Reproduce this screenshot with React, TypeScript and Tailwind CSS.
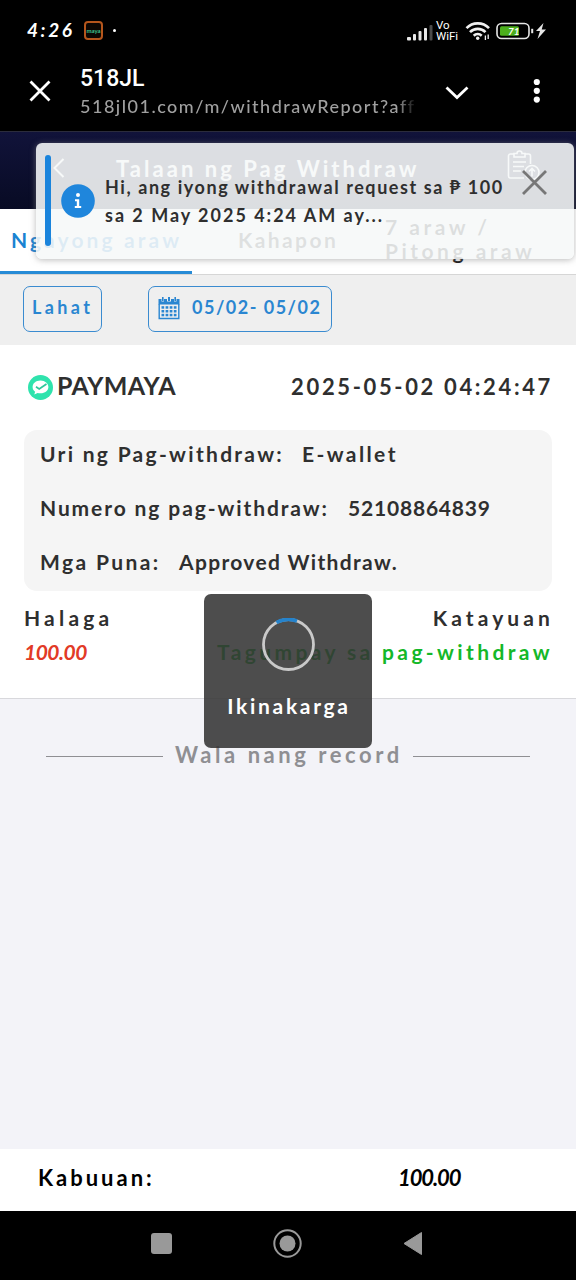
import { clsx } from 'clsx';

const details = [
  {
    label: 'Uri ng Pag-withdraw:',
    value: 'E-wallet',
    labelClass: 'w-[262px] tracking-[2.3px]',
    valueClass: 'tracking-[2.4px]',
  },
  {
    label: 'Numero ng pag-withdraw:',
    value: '52108864839',
    labelClass: 'w-[308px] tracking-[1.9px]',
    valueClass: 'tracking-[0.8px]',
  },
  {
    label: 'Mga Puna:',
    value: 'Approved Withdraw.',
    labelClass: 'w-[139px] tracking-[2.4px]',
    valueClass: 'tracking-[1.33px]',
  },
];

export default function App() {
  return (
    <div className="relative flex h-[1280px] w-[576px] flex-col overflow-hidden bg-[#f3f3f8] font-['Lato',sans-serif] font-bold whitespace-nowrap text-[#2f2f2f]">
      <StatusBar />
      <BrowserBar />
      <PageHeader />
      <Tabs />
      <Filters />
      <RecordCard />
      <EndOfList />
      <footer className="flex h-[62px] shrink-0 items-center bg-white pb-[5px] pl-[38px] text-[22px] text-black">
        <span className="w-[360px] tracking-[3px]">Kabuuan:</span>
        <span className="tracking-[-1.1px] italic">100.00</span>
      </footer>
      <NavBar />
      <Toast />
      <Loading />
    </div>
  );
}

function StatusBar() {
  return (
    <div className="flex h-[61px] shrink-0 items-center bg-black pl-[27px] text-white">
      <span className="w-[57px] text-[19px] tracking-[2.6px] italic">4:26</span>
      <span className="flex h-[19px] w-[19px] items-center justify-center rounded-[4px] border-2 border-[#b5561c] bg-[#0c0703] text-[6px] font-bold text-[#3fc48c]">
        maya
      </span>
      <span className="ml-[10px] h-[3px] w-[3px] rounded-full bg-white" />

      <div className="ml-auto flex items-center">
        <svg className="mt-[2px] h-[18px] w-[26px]" viewBox="0 0 26 18" fill="#e8e8e8">
          <rect x="0" y="14" width="4" height="3.5" rx="1" />
          <rect x="6" y="11" width="3" height="6.5" rx="1" />
          <rect x="11.5" y="8" width="3" height="9.5" rx="1" />
          <rect x="17" y="5" width="3" height="12.5" rx="1" />
          <rect x="22.5" y="2" width="3" height="15.5" rx="1" fill="#4a4a4a" />
        </svg>
        <span className="ml-[3px] w-[29px] font-['Roboto'] text-[11.5px] leading-[11px] font-normal text-white">
          <span className="block">Vo</span>
          <span className="block">WiFi</span>
        </span>
        <svg className="h-[20px] w-[26px]" viewBox="0 0 26 20" fill="none" stroke="#f0f0f0" strokeWidth="2.6">
          <path d="M1.5 7.2a15.5 15.5 0 0 1 22.5 0" />
          <path d="M5 11.2a10.8 10.8 0 0 1 15.5 0" />
          <path d="M8.7 14.7a5.8 5.8 0 0 1 8 0" />
          <circle cx="12.7" cy="17.3" r="1.7" fill="#f0f0f0" stroke="none" />
          <path d="M20.4 14.5v4.500M23.2 13.500v4.500" strokeWidth="1.3" />
        </svg>
        <svg className="ml-[5px] h-[18px] w-[52px]" viewBox="0 0 52 18">
          <rect x="1" y="1.5" width="32" height="15" rx="4.5" fill="none" stroke="#e6e6e6" strokeWidth="1.6" />
          <rect x="4" y="4.2" width="19" height="9.6" rx="1.5" fill="#4caf1d" />
          <text x="12" y="12.8" fontSize="10" fontStyle="italic" fontWeight="700" fill="#fff" fontFamily="Lato">
            71
          </text>
          <path d="M36.2 6.8v4.4" stroke="#e6e6e6" strokeWidth="2" />
          <path d="M47.500 1l-7.500 8h4l-2.500 8 8.500-9.500h-4.300z" fill="#e6e6e6" />
        </svg>
      </div>
      <span className="w-[28px]" />
    </div>
  );
}

function BrowserBar() {
  return (
    <div className="flex h-[70px] shrink-0 bg-black text-white">
      <svg className="mt-[19px] ml-[29px] h-[22px] w-[22px]" viewBox="0 0 22 22" stroke="#fff" strokeWidth="2.8">
        <path d="M1.5 1.5l19 19M20.5 1.5l-19 19" />
      </svg>
      <div className="ml-[29px] w-[337px]">
        <div className="mt-[4px] font-['Roboto'] text-[23px] leading-[28px] font-medium">518JL</div>
        <div className="overflow-hidden mask-r-from-94% text-[18px] leading-[26px] font-medium tracking-[1.5px] text-[#a0a0a0]">
          518jl01.com/m/withdrawReport?aff
        </div>
      </div>
      <svg className="mt-[25px] ml-[28px] h-[14px] w-[24px]" viewBox="0 0 24 14" fill="none" stroke="#fff" strokeWidth="2.8">
        <path d="M1.5 1.5L12 11.5l10.5-10" />
      </svg>
      <svg className="mt-[17px] ml-[64px] h-[26px] w-[8px]" viewBox="0 0 8 26" fill="#fff">
        <circle cx="3.8" cy="4" r="3.1" />
        <circle cx="3.8" cy="12.8" r="3.1" />
        <circle cx="3.8" cy="21.6" r="3.1" />
      </svg>
    </div>
  );
}

function PageHeader() {
  return (
    <header className="flex h-[78px] shrink-0 items-center border-t border-[#2b2c3c] bg-linear-to-b from-[#11133a] to-[#080b24] pb-[5px] text-white">
      <svg className="ml-[53px] h-[20px] w-[12px]" viewBox="0 0 12 20" fill="none" stroke="#fff" strokeWidth="2">
        <path d="M10.5 1L1.5 10l9 9" />
      </svg>
      <h1 className="ml-[51px] w-[302px] text-[22px] tracking-[3.04px]">Talaan ng Pag Withdraw</h1>
      <svg className="mb-[4px] ml-[89px] h-[32px] w-[34px]" viewBox="0 0 34 32" fill="none" stroke="#fff" strokeWidth="1.6">
        <path d="M7 4H3.5A2 2 0 0 0 1.5 6v20a2 2 0 0 0 2 2H17M18 4h3.500a2 2 0 0 1 2 2v8" />
        <path d="M7 6V3.500h3a2.500 2.500 0 0 1 5 0h3V7H7z" />
        <path d="M6 12h13M6 16.500h11M6 21h8" />
        <circle cx="25" cy="22.500" r="7" />
        <path d="M25 26.500v-8M22 21.500l3-3 3 3" />
      </svg>
    </header>
  );
}

function Tabs() {
  return (
    <nav className="flex h-[66px] shrink-0 items-stretch border-b border-[#d6d6d6] bg-white text-[21px]">
      <div className="flex w-[192px] items-center border-b-3 border-[#278bd6] pl-[11px] tracking-[3.1px] text-[#1a83d2]">
        Ngayong araw
      </div>
      <div className="flex w-[192px] items-center pb-[4px] pl-[46px] tracking-[2.4px] text-[#222]">Kahapon</div>
      <div className="flex flex-col justify-center pb-[5px] pl-[1px] leading-[24px] tracking-[3.5px] text-[#111]">
        <span>7 araw /</span>
        <span>Pitong araw</span>
      </div>
    </nav>
  );
}

function Filters() {
  return (
    <div className="flex h-[70px] shrink-0 items-center bg-[#efefef] pl-[23px] text-[18px] text-[#2a86d1]">
      <button className="mb-[3px] flex h-[46px] w-[79px] items-center rounded-[7px] border border-[#3a8bd0] pb-[2px] pl-[8px] tracking-[3.4px]">
        Lahat
      </button>
      <button className="mb-[3px] ml-[46px] flex h-[46px] w-[184px] items-center rounded-[7px] border border-[#3a8bd0] pb-[2px] pl-[9px]">
        <svg className="h-[24px] w-[22px]" viewBox="0 0 22 24" fill="#2a86d1">
          <path d="M.5 3h3v2.500h2.500V3h3v2.500h4V3h3v2.500h2.500V3h3v5.500h-21z" />
          <path d="M4 1h1.600v4H4zM10 1h2v4h-2zM16.400 1H18v4h-1.600z" />
          <path d="M1.200 8v14.500h19.600V8" fill="none" stroke="#2a86d1" strokeWidth="1.400" />
          {[10.2, 14, 17.8].map((y) =>
            [3.5, 7.6, 11.7, 15.8].map((x) => <rect key={`${x}-${y}`} x={x} y={y} width="2.7" height="2.5" />)
          )}
        </svg>
        <span className="ml-[12px] tracking-[1.5px]">05/02- 05/02</span>
      </button>
    </div>
  );
}

function RecordCard() {
  return (
    <section className="flex h-[354px] shrink-0 flex-col border-b border-[#d8d8dc] bg-white px-[24px] pt-[21px]">
      <div className="flex h-[40px] items-center">
        <svg className="mt-[3px] ml-[4px] h-[25px] w-[25px]" viewBox="0 0 25 25">
          <circle cx="12.500" cy="12.500" r="12.500" fill="#2fe3ad" />
          <path d="M12.500 5.500c-4.600 0-7.900 2.900-7.900 6.500 0 1.900 1 3.600 2.500 4.700l-.8 2.800 3.300-1.600c.9.300 1.900.4 2.900.4 4.600 0 7.900-2.800 7.900-6.300s-3.300-6.500-7.900-6.500z" fill="#fff" />
          <path d="M8 11.800l3.200 2.200L18.500 9" fill="none" stroke="#2fc79a" strokeWidth="1.700" />
        </svg>
        <span className="ml-[4px] text-[25px] tracking-[0.3px]">PAYMAYA</span>
        <span className="-mr-[1px] ml-auto text-[22px] tracking-[2.64px]">2025-05-02 04:24:47</span>
      </div>

      <div className="mt-[24px] flex h-[161px] flex-col gap-[24px] rounded-[13px] bg-[#f5f5f5] pt-[9px] pl-[16px] text-[21px] leading-[30px]">
        {details.map((d) => (
          <div key={d.label} className="flex">
            <span className={clsx('shrink-0', d.labelClass)}>{d.label}</span>
            <span className={d.valueClass}>{d.value}</span>
          </div>
        ))}
      </div>

      <div className="mt-[12px] flex justify-between text-[21px] leading-[30px]">
        <span className="tracking-[4.2px]">Halaga</span>
        <span className="-mr-[2px] tracking-[4.1px]">Katayuan</span>
      </div>
      <div className="mt-[4px] flex justify-between text-[21px] leading-[30px]">
        <span className="tracking-[-0.5px] text-[#e23a26] italic">100.00</span>
        <span className="-mr-[1px] tracking-[3.38px] text-[#14b828]">Tagumpay sa pag-withdraw</span>
      </div>
    </section>
  );
}

function EndOfList() {
  return (
    <div className="flex flex-1 items-start px-[46px] pt-[41px] text-[22px] leading-[30px] text-[#8f8f93]">
      <span className="mt-[16px] h-px w-[117px] bg-[#8f8f93]" />
      <span className="w-[250px] pl-[12px] tracking-[3.55px]">Wala nang record</span>
      <span className="mt-[16px] h-px w-[117px] bg-[#8f8f93]" />
    </div>
  );
}

function NavBar() {
  return (
    <div className="flex h-[69px] shrink-0 items-center bg-black pb-[4px]">
      <span className="ml-[151px] h-[21px] w-[21px] rounded-[3px] bg-[#999]" />
      <svg className="ml-[101px] h-[29px] w-[29px]" viewBox="0 0 29 29">
        <circle cx="14.500" cy="14.500" r="13.200" fill="none" stroke="#999" strokeWidth="2" />
        <circle cx="14.500" cy="14.500" r="8" fill="#999" />
      </svg>
      <svg className="ml-[101px] h-[25px] w-[20px]" viewBox="0 0 20 25" fill="#999" stroke="#999" strokeLinejoin="round">
        <path d="M18.500 1.500v22L1 12.500z" />
      </svg>
    </div>
  );
}

function Toast() {
  return (
    <div className="absolute top-[143px] left-[36px] flex h-[116px] w-[538px] rounded-[6px] bg-[rgba(246,248,248,0.89)] text-[18px] leading-[28px] shadow-[0_1px_6px_rgba(140,140,140,0.6)]">
      <span className="mt-[12px] ml-[9px] h-[91px] w-[6px] rounded-[3px] bg-[#1a84dc]" />
      <svg className="mt-[41px] ml-[10px] h-[34px] w-[34px]" viewBox="0 0 34 34">
        <circle cx="17" cy="17" r="16.800" fill="#1f86dc" />
        <circle cx="17" cy="11" r="2" fill="#fff" />
        <path d="M14 15.200h4.200V22h2v2h-6.400v-2h2v-4.800H14z" fill="#fff" />
      </svg>
      <div className="mt-[30px] ml-[10px]">
        <div className="tracking-[1.57px]">Hi, ang iyong withdrawal request sa ₱ 100</div>
        <div className="tracking-[1.98px]">sa 2 May 2025 4:24 AM ay...</div>
      </div>
      <svg className="absolute top-[27px] left-[486px] h-[25px] w-[25px]" viewBox="0 0 25 25" stroke="#777" strokeWidth="2.800">
        <path d="M1 1l23 23M24 1L1 24" />
      </svg>
    </div>
  );
}

function Loading() {
  return (
    <div className="absolute top-[594px] left-[204px] flex h-[154px] w-[168px] flex-col items-center rounded-[7px] bg-[rgba(52,52,52,0.88)] pt-[24px] text-[21px] leading-[30px] text-white">
      <svg className="h-[53px] w-[53px]" viewBox="0 0 53 53" fill="none" strokeWidth="2.800">
        <circle cx="26.500" cy="26.500" r="25" stroke="#c9c9c9" />
        <path d="M14.500 4.500A25 25 0 0 1 35 3" stroke="#2583cc" strokeWidth="3.600" />
      </svg>
      <span className="mt-[20px] pl-[2px] tracking-[2.7px]">Ikinakarga</span>
    </div>
  );
}
